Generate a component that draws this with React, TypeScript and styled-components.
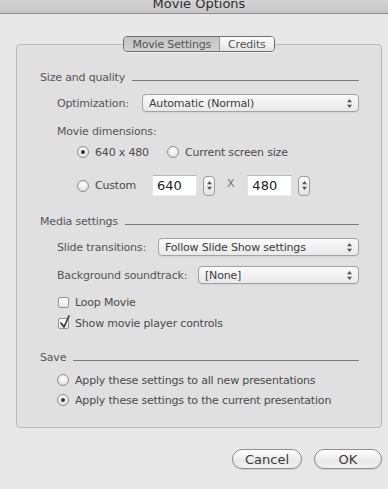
import React from "react";
import styled, { createGlobalStyle } from "styled-components";

const Global = createGlobalStyle`
  html, body { margin: 0; padding: 0; background: #e8e8e8; }
  body { font-family: "DejaVu Sans", "Liberation Sans", sans-serif; }
`;

const Window = styled.div`
  width: 388px;
  height: 489px;
  background: #e8e8e8;
  display: flex;
  flex-direction: column;
  overflow: hidden;
  color: #4a4a4a;
  font-size: 11px;
  letter-spacing: -0.18px;
`;

const TitleBar = styled.div`
  height: 14px;
  box-sizing: border-box;
  background: linear-gradient(#d4d4d4, #c6c6c6);
  border-bottom: 1px solid #8c8c8c;
  display: flex;
  justify-content: center;
  align-items: flex-end;
  overflow: hidden;
`;

const TitleText = styled.div`
  font-size: 13px;
  line-height: 13px;
  color: #2e2e2e;
  margin-bottom: 3px;
  padding-left: 10px;
  letter-spacing: 0;
`;

const Body = styled.div`
  display: flex;
  flex-direction: column;
  padding: 22px 6px 0 16px;
`;

const TabBar = styled.div`
  align-self: center;
  display: flex;
  height: 14px;
  border: 1px solid #6e6e6e;
  border-radius: 4px;
  overflow: hidden;
  margin-bottom: -8px;
  position: relative;
  z-index: 1;
  box-shadow: 0 1px 0 rgba(255,255,255,0.6);
`;

const Tab = styled.div<{ $active?: boolean }>`
  display: flex;
  align-items: center;
  justify-content: center;
  padding: 0 8px;
  font-size: 11px;
  color: #555;
  background: ${(p) =>
    p.$active ? "linear-gradient(#c4c4c4, #d2d2d2)" : "linear-gradient(#fdfdfd, #e4e4e4)"};
  & + & { border-left: 1px solid #9a9a9a; }
`;

const Group = styled.div`
  height: 384px;
  box-sizing: border-box;
  border: 1px solid #b9b9b9;
  border-radius: 4px;
  background: #e0e0e0;
  padding: 24px 22px 0 23px;
  display: flex;
  flex-direction: column;
`;

const SectionHead = styled.div<{ $mt?: number }>`
  display: flex;
  align-items: center;
  height: 16px;
  margin-top: ${(p) => p.$mt ?? 0}px;
  gap: 7px;
  color: #555;
  &::after {
    content: "";
    flex: 1;
    height: 1px;
    background: #7a7a7a;
    margin-top: 7px;
  }
`;

const Row = styled.div<{ $mt?: number; $indent?: number; $h?: number }>`
  display: flex;
  align-items: center;
  height: ${(p) => p.$h ?? 16}px;
  margin-top: ${(p) => p.$mt ?? 0}px;
  padding-left: ${(p) => p.$indent ?? 17}px;
`;

const Label = styled.span<{ $w?: number }>`
  color: #555;
  white-space: nowrap;
  ${(p) => (p.$w ? `width: ${p.$w}px; flex: none;` : "")}
`;

const Select = styled.div`
  flex: 1;
  height: 18px;
  box-sizing: border-box;
  border: 1px solid #a2a2a2;
  border-radius: 4px;
  background: linear-gradient(#fafafa, #e9e9e9);
  display: flex;
  align-items: center;
  padding-left: 6px;
  padding-right: 5px;
  color: #3c3c3c;
  box-shadow: 0 1px 0 rgba(0,0,0,0.05);
`;

const SelectText = styled.span`
  flex: 1;
`;

const Arrows = ({ w = 7 }: { w?: number }) => (
  <svg width={w} height="11" viewBox="0 0 7 11">
    <path d="M3.5 1 L6 4.2 L1 4.2 Z" fill="#555" />
    <path d="M3.5 10 L6 6.8 L1 6.8 Z" fill="#555" />
  </svg>
);

const Radio = styled.span<{ $on?: boolean }>`
  width: 12px;
  height: 12px;
  box-sizing: border-box;
  flex: none;
  border-radius: 50%;
  border: 1px solid #8e8e8e;
  background: radial-gradient(circle at 50% 35%, #ffffff, #e4e4e4 70%, #d0d0d0);
  display: flex;
  align-items: center;
  justify-content: center;
  margin-right: 6px;
  &::after {
    content: "";
    width: 4px;
    height: 4px;
    border-radius: 50%;
    background: #333;
    display: ${(p) => (p.$on ? "block" : "none")};
  }
`;

const Check = styled.span`
  width: 11px;
  height: 11px;
  box-sizing: border-box;
  flex: none;
  border: 1px solid #939393;
  border-radius: 2px;
  background: linear-gradient(#ffffff, #e6e6e6);
  margin-right: 6px;
  position: relative;
  display: flex;
`;

const CheckMark = styled.svg`
  position: absolute;
  left: 0px;
  top: -4px;
`;

const Choice = styled.span<{ $w?: number }>`
  display: flex;
  align-items: center;
  ${(p) => (p.$w ? `width: ${p.$w}px;` : "")}
`;

const Field = styled.div`
  width: 45px;
  height: 21px;
  box-sizing: border-box;
  background: #fff;
  border-top: 1px solid #b8b8b8;
  border-left: 1px solid #e2e2e2;
  border-right: 1px solid #e2e2e2;
  border-bottom: 1px solid #ececec;
  display: flex;
  align-items: center;
  padding-left: 4px;
  font-size: 13px;
  color: #222;
  letter-spacing: 0;
`;

const Stepper = styled.div`
  width: 12px;
  height: 20px;
  box-sizing: border-box;
  border: 1px solid #9a9a9a;
  border-radius: 4px;
  background: linear-gradient(#fbfbfb, #e3e3e3);
  display: flex;
  align-items: center;
  justify-content: center;
  margin-left: 6px;
`;

const Times = styled.span`
  color: #777;
  font-size: 11px;
  margin: 0 13px 0 12px;
  padding-bottom: 5px;
`;

const Footer = styled.div`
  display: flex;
  justify-content: flex-end;
  gap: 12px;
  padding: 21px 0 0 0;
`;

const Button = styled.div<{ $w: number }>`
  width: ${(p) => p.$w}px;
  height: 20px;
  box-sizing: border-box;
  border: 1px solid #8e8e8e;
  border-radius: 10px;
  background: linear-gradient(#ffffff, #e8e8e8 60%, #f2f2f2);
  display: flex;
  align-items: center;
  justify-content: center;
  font-size: 13px;
  letter-spacing: 0;
  color: #3a3a3a;
  box-shadow: 0 1px 1px rgba(0,0,0,0.12);
`;

export default function App() {
  return (
    <Window>
      <Global />
      <TitleBar>
        <TitleText>Movie Options</TitleText>
      </TitleBar>
      <Body>
        <TabBar>
          <Tab $active>Movie Settings</Tab>
          <Tab>Credits</Tab>
        </TabBar>
        <Group>
          <SectionHead>Size and quality</SectionHead>
          <Row $mt={9} $h={18}>
            <Label $w={85}>Optimization:</Label>
            <Select>
              <SelectText>Automatic (Normal)</SelectText>
              <Arrows />
            </Select>
          </Row>
          <Row $mt={11}>
            <Label>Movie dimensions:</Label>
          </Row>
          <Row $mt={5} $indent={37}>
            <Choice $w={90}>
              <Radio $on />
              640 x 480
            </Choice>
            <Choice>
              <Radio />
              Current screen size
            </Choice>
          </Row>
          <Row $mt={15} $h={21} $indent={37}>
            <Choice $w={75}>
              <Radio />
              Custom
            </Choice>
            <Field>640</Field>
            <Stepper>
              <Arrows />
            </Stepper>
            <Times>X</Times>
            <Field>480</Field>
            <Stepper>
              <Arrows />
            </Stepper>
          </Row>
          <SectionHead $mt={17}>Media settings</SectionHead>
          <Row $mt={9} $h={18}>
            <Label $w={101}>Slide transitions:</Label>
            <Select>
              <SelectText>Follow Slide Show settings</SelectText>
              <Arrows />
            </Select>
          </Row>
          <Row $mt={10} $h={18}>
            <Label $w={141}>Background soundtrack:</Label>
            <Select>
              <SelectText>[None]</SelectText>
              <Arrows />
            </Select>
          </Row>
          <Row $mt={10} $indent={18}>
            <Choice>
              <Check />
              Loop Movie
            </Choice>
          </Row>
          <Row $mt={5} $indent={18}>
            <Choice>
              <Check>
                <CheckMark width="12" height="14" viewBox="0 0 12 14">
                  <path d="M2 8 L5 12 L10 1" stroke="#333" strokeWidth="1.6" fill="none" strokeLinecap="round" strokeLinejoin="round" />
                </CheckMark>
              </Check>
              Show movie player controls
            </Choice>
          </Row>
          <SectionHead $mt={18}>Save</SectionHead>
          <Row $mt={7}>
            <Choice>
              <Radio />
              Apply these settings to all new presentations
            </Choice>
          </Row>
          <Row $mt={4}>
            <Choice>
              <Radio $on />
              Apply these settings to the current presentation
            </Choice>
          </Row>
        </Group>
        <Footer>
          <Button $w={70}>Cancel</Button>
          <Button $w={68}>OK</Button>
        </Footer>
      </Body>
    </Window>
  );
}
